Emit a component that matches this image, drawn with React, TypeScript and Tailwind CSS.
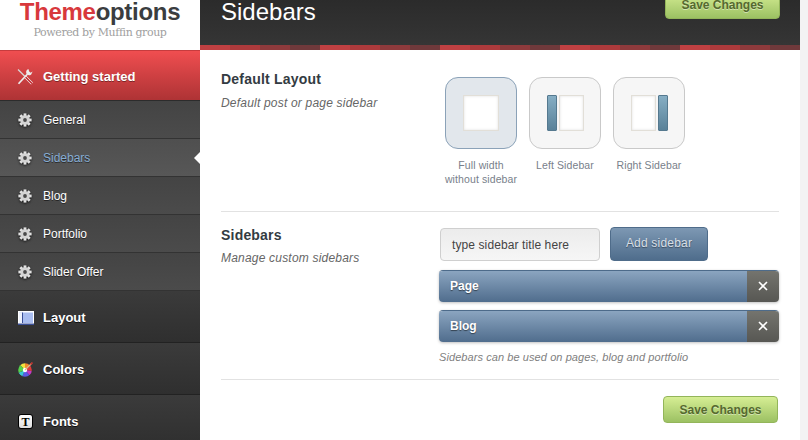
import React from "react";

const font = "font-['Liberation_Sans',Arial,sans-serif]";

function Gear() {
  const teeth = [0, 45, 90, 135];
  return (
    <svg width="14" height="14" viewBox="0 0 14 14" className="shrink-0 drop-shadow-[0_1px_1px_rgba(0,0,0,0.7)]">
      {teeth.map((a) => (
        <rect key={a} x="5.6" y="0.4" width="2.8" height="13.2" fill="#e4e4e4" transform={`rotate(${a} 7 7)`} />
      ))}
      <circle cx="7" cy="7" r="4.8" fill="#d4d4d4" />
      <circle cx="7" cy="7" r="1.9" fill="#4a4a4a" />
    </svg>
  );
}

function Tools() {
  return (
    <svg width="16" height="17" viewBox="0 0 16 17" className="shrink-0">
      <path d="M1 1.5 L8 8.5" stroke="#d8d8d8" strokeWidth="1.2" />
      <path d="M8 8.5 L15 15.5" stroke="#f4f4f4" strokeWidth="2.6" />
      <path d="M8 8.5 L15 15.5" stroke="#c0181f" strokeWidth="1.3" />
      <path d="M1.5 15.8 L10.5 6" stroke="#ececec" strokeWidth="1.7" />
      <path d="M11.4 1 a3.4 3.4 0 0 0 -2 4.6 a3.4 3.4 0 0 0 4.8 .8 L15.6 3.4 L13.6 4.8 L12.2 3.6 Z" fill="#ececec" />
    </svg>
  );
}

function LayoutIcon() {
  return (
    <svg width="16" height="14" viewBox="0 0 16 14" className="shrink-0">
      <rect x="0" y="0" width="16" height="14" fill="#fff" />
      <rect x="1" y="1.5" width="14" height="10.5" fill="#a9bdf0" />
      <rect x="1" y="1.5" width="3" height="10.5" fill="#eef2fd" />
      <rect x="4" y="1.5" width="1" height="10.5" fill="#3a4f96" />
      <rect x="0" y="12.5" width="16" height="1.5" fill="#3a4f96" />
    </svg>
  );
}

function ColorsIcon() {
  return (
    <svg width="15" height="15" viewBox="0 0 15 15" className="shrink-0">
      <defs>
        <clipPath id="wheel">
          <circle cx="7" cy="8" r="6.8" />
        </clipPath>
      </defs>
      <g clipPath="url(#wheel)">
        <path d="M7 8 L0 1 L7 0 Z" fill="#f2e23c" />
        <path d="M7 8 L7 0 L15 1 Z" fill="#f08a2c" />
        <path d="M7 8 L15 1 L15 9 Z" fill="#e23a3a" />
        <path d="M7 8 L15 9 L13 15 Z" fill="#c43ac4" />
        <path d="M7 8 L13 15 L4 15 Z" fill="#5a5ae6" />
        <path d="M7 8 L4 15 L0 11 Z" fill="#3ac6d6" />
        <path d="M7 8 L0 11 L0 1 Z" fill="#55d24a" />
      </g>
      <circle cx="7" cy="8" r="2.2" fill="#fff" />
      <path d="M7 8 L14 1" stroke="#d9b98a" strokeWidth="1.2" />
      <path d="M12.5 2.5 L14.5 0.5" stroke="#c62828" strokeWidth="1.4" />
    </svg>
  );
}

function FontsIcon() {
  return (
    <div className="w-[15px] h-[15px] shrink-0 bg-gradient-to-b from-white to-[#ddd] border border-black rounded-[3px] flex items-center justify-center text-black font-bold text-[12px] leading-[12px] font-['Liberation_Serif',serif]">
      T
    </div>
  );
}

function SubItem({ label, active }: { label: string; active?: boolean }) {
  return (
    <div
      className={`relative h-[38px] shrink-0 flex items-center pl-[18px] gap-[11px] border-b border-[#333] text-[12px] bg-gradient-to-b ${
        active ? "from-[#4f4f4f] to-[#575757] text-[#86add4]" : "from-[#444] to-[#4b4b4b] text-white"
      }`}
    >
      <Gear />
      <span className="[text-shadow:0_1px_0_rgba(0,0,0,0.5)]">{label}</span>
      {active && (
        <span className="absolute right-0 top-[13px] w-0 h-0 border-y-[6px] border-y-transparent border-r-[6px] border-r-white" />
      )}
    </div>
  );
}

function MainItem({ label, icon }: { label: string; icon: React.ReactNode }) {
  return (
    <div className="h-[52px] shrink-0 flex items-center pl-[18px] pt-[2px] gap-[10px] border-b border-[#222] bg-gradient-to-b from-[#3b3b3b] to-[#2f2f2f] text-white text-[13px] font-bold">
      <span className="w-[15px] flex justify-center">{icon}</span>
      <span className="[text-shadow:0_1px_0_rgba(0,0,0,0.7)]">{label}</span>
    </div>
  );
}

function SaveButton({ className }: { className: string }) {
  return (
    <button
      className={`w-[115px] shrink-0 flex items-center justify-center rounded-[4px] border border-[#93b55a] bg-gradient-to-b from-[#d6ee94] to-[#9cc163] text-[#55692f] text-[12px] font-bold [text-shadow:0_1px_0_rgba(255,255,255,0.45)] ${className}`}
    >
      Save Changes
    </button>
  );
}

function LayoutOption({ selected, kind, label }: { selected?: boolean; kind: "full" | "left" | "right"; label: React.ReactNode }) {
  const page = <div className={`${kind === "full" ? "w-[36px]" : "w-[25px]"} h-[36px] bg-white border border-[#e2dfd8] shadow-[inset_0_0_3px_rgba(0,0,0,0.12)]`} />;
  const bar = <div className="w-[10px] h-[36px] rounded-[1px] border border-[#55798f] bg-gradient-to-b from-[#86aec4] to-[#5a8299]" />;
  return (
    <div className="w-[72px] flex flex-col items-center">
      <div
        className={`w-[72px] h-[72px] rounded-[13px] border flex items-center justify-center gap-[2px] ${
          selected ? "bg-[#e2e7ec] border-[#8ba2b8]" : "bg-[#f6f6f6] border-[#c9c9c9]"
        }`}
      >
        {kind === "left" && bar}
        {page}
        {kind === "right" && bar}
      </div>
      <div className="mt-[9px] w-[90px] text-center text-[10.5px] leading-[14px] tracking-[0.1px] text-[#78808a]">{label}</div>
    </div>
  );
}

function SidebarRow({ label }: { label: string }) {
  return (
    <div className="h-[32px] flex rounded-[4px] overflow-hidden shadow-[0_1px_3px_rgba(0,0,0,0.25)] border-t border-[#4d6b8a]">
      <div className="flex-1 flex items-center pl-[11px] pb-[2px] bg-gradient-to-b from-[#8ba5c0] to-[#506d8d] text-white text-[12px] font-bold [text-shadow:0_1px_1px_rgba(0,0,0,0.5)]">
        {label}
      </div>
      <div className="w-[32px] flex items-center justify-center pb-[1px] bg-gradient-to-b from-[#74746e] to-[#575753]">
        <svg width="10" height="10" viewBox="0 0 10 10">
          <path d="M1 1 L9 9 M9 1 L1 9" stroke="#fff" strokeWidth="1.6" />
        </svg>
      </div>
    </div>
  );
}

export default function App() {
  return (
    <div className={`${font} w-[808px] h-[440px] overflow-hidden flex bg-[#f3f3f3]`}>
      <aside className="w-[200px] shrink-0 flex flex-col">
        <div className="h-[50px] shrink-0 bg-white flex flex-col items-center overflow-hidden">
          <div className="text-[24px] leading-[24px] font-bold whitespace-nowrap tracking-[-0.3px]">
            <span className="text-[#d8383c]">Theme</span>
            <span className="text-[#3a3d40]">options</span>
          </div>
          <div className="leading-[14px] mt-[2px] text-[#a0a0a0] font-['DejaVu_Serif',serif] text-[11px] tracking-[-0.4px] whitespace-nowrap">
            Powered by Muffin group
          </div>
        </div>
        <div className="h-[51px] shrink-0 flex items-center pl-[17px] pt-[2px] gap-[10px] border-t border-[#c63c3e] border-b border-b-[#2c2c2c] bg-gradient-to-b from-[#f04e50] to-[#ae3335] text-white text-[13px] font-bold">
          <Tools />
          <span className="[text-shadow:0_1px_0_rgba(0,0,0,0.4)]">Getting started</span>
        </div>
        <SubItem label="General" />
        <SubItem label="Sidebars" active />
        <SubItem label="Blog" />
        <SubItem label="Portfolio" />
        <SubItem label="Slider Offer" />
        <MainItem label="Layout" icon={<LayoutIcon />} />
        <MainItem label="Colors" icon={<ColorsIcon />} />
        <MainItem label="Fonts" icon={<FontsIcon />} />
      </aside>

      <main className="w-[600px] shrink-0 bg-white flex flex-col">
        <header className="h-[50px] shrink-0 bg-[#333] flex flex-col">
          <div className="h-[45px] flex items-start justify-between pl-[21px] pr-[20px] bg-gradient-to-b from-[#2b2b2b] to-[#353535]">
            <h1 className="text-[24px] leading-[24px] text-white">Sidebars</h1>
            <SaveButton className="h-[28px] -mt-[9px]" />
          </div>
          <div className="h-[5px] bg-[repeating-linear-gradient(90deg,#c04042_0,#c04042_30px,#ad3a3c_30px,#ad3a3c_60px,#8e3a3c_60px,#8e3a3c_90px,#6f393b_90px,#6f393b_120px)]" />
        </header>

        <div className="flex-1 px-[21px] flex flex-col">
          <section className="h-[162px] shrink-0 flex border-b border-[#e2e2e2]">
            <div className="w-[224px] pt-[21px]">
              <h2 className="text-[14px] leading-[16px] font-bold text-[#333b42] tracking-[0.2px]">Default Layout</h2>
              <p className="mt-[9px] text-[12px] leading-[14px] italic text-[#666] tracking-[0.2px]">Default post or page sidebar</p>
            </div>
            <div className="pt-[27px] flex gap-[12px]">
              <LayoutOption selected kind="full" label={<>Full width<br />without sidebar</>} />
              <LayoutOption kind="left" label="Left Sidebar" />
              <LayoutOption kind="right" label="Right Sidebar" />
            </div>
          </section>

          <section className="h-[168px] shrink-0 flex border-b border-[#e2e2e2]">
            <div className="w-[218px] pt-[15px]">
              <h2 className="text-[14px] leading-[16px] font-bold text-[#333b42] tracking-[0.2px]">Sidebars</h2>
              <p className="mt-[8px] text-[12px] leading-[14px] italic text-[#666] tracking-[0.2px]">Manage custom sidebars</p>
            </div>
            <div className="flex-1 pt-[15px] flex flex-col">
              <div className="flex gap-[10px] items-end pl-[1px]">
                <div className="w-[160px] h-[33px] flex items-center pl-[11px] rounded-[4px] border border-[#cfcfcf] bg-gradient-to-b from-[#ececec] to-[#f6f6f6] text-[12px] tracking-[0.1px] text-[#444]">
                  type sidebar title here
                </div>
                <button className="w-[98px] h-[34px] pb-[2px] rounded-[4px] border border-[#4f6c8a] bg-gradient-to-b from-[#7d98b3] to-[#4f6d8c] text-[12px] text-[#d8dfe6] tracking-[0.2px] [text-shadow:0_1px_1px_rgba(0,0,0,0.4)]">
                  Add sidebar
                </button>
              </div>
              <div className="mt-[9px] flex flex-col gap-[8px]">
                <SidebarRow label="Page" />
                <SidebarRow label="Blog" />
              </div>
              <p className="mt-[8px] text-[11px] leading-[14px] italic text-[#808080] tracking-[0.08px]">
                Sidebars can be used on pages, blog and portfolio
              </p>
            </div>
          </section>

          <div className="flex justify-end pt-[16px] pr-[1px]">
            <SaveButton className="h-[27px]" />
          </div>
        </div>
      </main>
    </div>
  );
}
